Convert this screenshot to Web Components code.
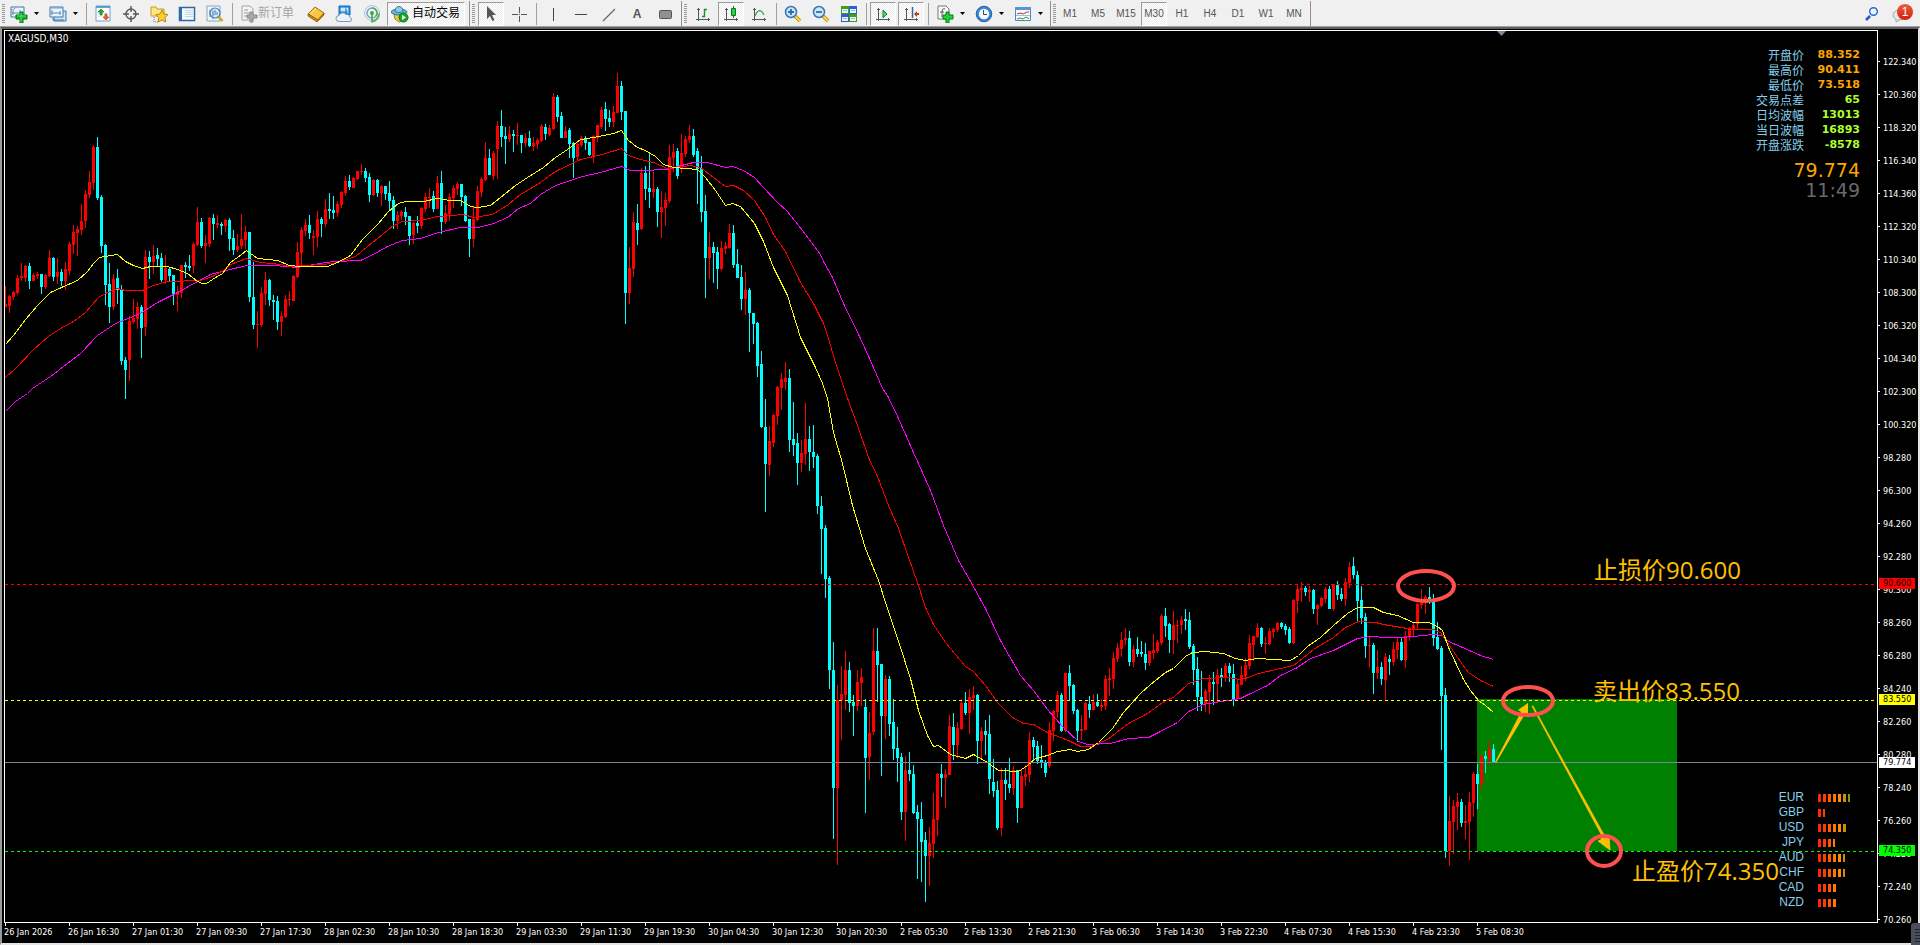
<!DOCTYPE html>
<html lang="zh-CN">
<head>
<meta charset="utf-8">
<title>XAGUSD,M30</title>
<style>
html,body{margin:0;height:100%;background:#000;overflow:hidden}
body{font-family:"Liberation Sans","Noto Sans CJK SC",sans-serif;--small:9px/12px "DejaVu Sans Condensed","Liberation Sans",sans-serif}
</style>
</head>
<body>
<trade-terminal></trade-terminal>
<script>
const ICONS={
newchart:'<path d="M1 2h13v10H1z" fill="#e8f3fb" stroke="#3f78a8"/><path d="M3 4v6M2 8h9M4 4l1-1M10 5v3" stroke="#5b8cb5" fill="none"/><path d="M10 7h3v3h4v4h-4v4h-3v-4H6v-4h4z" fill="#12b52a" stroke="#087018"/><path d="M11 8v9M7 11h9" stroke="#57e25c"/>',
profiles:'<path d="M5 6h12v10H5z" fill="#cfe3f4" stroke="#3f78a8"/><path d="M1 2h13v10H1z" fill="#e8f3fb" stroke="#3f78a8"/><path d="M1 3h13" stroke="#6ea3cf"/><path d="M3 5v5M2 8h10M11 6v4" stroke="#5b8cb5" fill="none"/><path d="M4 13v2h11" stroke="#3f78a8" fill="none"/>',
market:'<path d="M2 1h14v15H2z" fill="#fbfdff" stroke="#6ba3d6"/><path d="M2 2h14" stroke="#3b86c6" stroke-width="1.500"/><path d="M4 8h10M4 11h10" stroke="#bcd0e0" stroke-dasharray="1 1"/><path d="M7 4l3 3H8v3H6V7H4z" fill="#18b41a" stroke="#0a7a10" stroke-width=".6"/><path d="M12 15l-3-3h2V9h2v3h2z" fill="#f2622a" stroke="#b93206" stroke-width=".6"/>',
target:'<g fill="none" stroke="#555" stroke-width="1.4"><circle cx="9" cy="9" r="5"/><path d="M9 1v6M9 11v6M1 9h6M11 9h6"/></g>',
favs:'<path d="M1 2h5l1 2h7v7H1z" fill="#ffe48a" stroke="#c99a1c"/><path d="M4 12v5h5" stroke="#777" stroke-dasharray="1 1" fill="none"/><path d="M12 5l2 4 4 .5-3 3 .8 4.500-3.800-2-4 2 .8-4.500-3-3 4.200-.5z" fill="#f8cf35" stroke="#b98708"/>',
datawin:'<path d="M1.500 2.500h15v13h-15z" fill="#f6fbff" stroke="#2c69a3" stroke-width="1.500"/><path d="M2 3h2v12H2z" fill="#2f6eb0"/><path d="M7 5.500h8M7 7.500h8M7 9.500h8M7 11.500h8" stroke="#c4d5e6"/>',
tester:'<path d="M1 1h13v15H1z" fill="#eef6fc" stroke="#8aa5bd"/><path d="M4 12V5M7 14V3" stroke="#5c7890"/><circle cx="9" cy="8" r="5" fill="#cfe8fa" fill-opacity=".85" stroke="#4180b8" stroke-width="1.200"/><path d="M7 6v5M9 5v5M11 7v3" stroke="#547ba0"/><path d="M12.500 12l4 4" stroke="#d9a520" stroke-width="2.500"/>',
order:'<path d="M2 1h8l3 3v11H2z" fill="#f4f4f4" stroke="#a2a2a2"/><path d="M4 5h4M4 8h6M4 11h4" stroke="#999"/><path d="M10 7h3v3h4v3h-4v4h-3v-4H7v-3h3z" fill="#aaa" stroke="#8b8b8b"/>',
book:'<path d="M1 9l7-7 9 6-6 7z" fill="#f6c644" stroke="#a66e0c"/><path d="M1 9v2l9 6 7-7V8l-6 7z" fill="#c98a16" stroke="#8c5c08" stroke-width=".8"/><path d="M4 8l5-4" stroke="#ffe9a0"/>',
cloud:'<path d="M4 1h11v9H4z" fill="#2c8de0" stroke="#1769b5"/><path d="M6 3h4v3H6zM11 3h2v5" fill="#bfe3ff" stroke="#e6f4ff" stroke-width=".6"/><path d="M4 16.500a3 3 0 010-6 4 4 0 017-1 3.500 3.500 0 014 3 2 2 0 01-1 4z" fill="#eaf1f8" stroke="#7f98b2"/>',
signal:'<g fill="none"><circle cx="9" cy="8" r="7.500" stroke="#b2c3cf"/><circle cx="9" cy="8" r="5" stroke="#7f9ecb" stroke-width="1.500"/><path d="M9 8v8.500a8 8 0 007-8" stroke="#59b65d" stroke-width="2"/><path d="M9 3a5 5 0 014 8" stroke="#57a86a" stroke-width="1.500"/></g><circle cx="9" cy="8" r="2" fill="#2fae42"/>',
auto:'<path d="M3 9l11 0-1 6-5 2-4-3z" fill="#f5ca3e" stroke="#a97b12"/><ellipse cx="8" cy="7" rx="8" ry="3" fill="#65b4d8" stroke="#34789c"/><path d="M4 6c0-6 8-6 8 0-2 2-6 2-8 0z" fill="#8dcbe6" stroke="#34789c"/><circle cx="12.500" cy="12.500" r="4.500" fill="#16ad22" stroke="#0a7513"/><path d="M11 10v5l4-2.500z" fill="#fff"/>',
cursor:'<path d="M5 1v13l3-3 2.500 5 2-1-2.500-5h4z" fill="#555"/>',
cross:'<path d="M9.500 2v6M9.500 11v6M2 9.500h6M11 9.500h6M9 9.500h1" stroke="#555" fill="none"/>',
vline:'<path d="M9.500 3v13" stroke="#444"/>',
hline:'<path d="M3 9.500h12" stroke="#444"/>',
dline:'<path d="M3 16L15 4" stroke="#666" stroke-width="1.200"/>',
rect:'<rect x="3.500" y="5.500" width="12" height="8" rx="1" fill="#909090" stroke="#555"/>',
bars:'<g fill="none"><path d="M4.500 3v13M2 14.500h14" stroke="#555"/><path d="M3 4.500h3M14.500 13v3" stroke="#555"/><path d="M8 11.500h2.500V4.500H13" stroke="#0b9a20" stroke-width="1.400"/></g>',
candle:'<g fill="none"><path d="M4.500 3v13M2 14.500h14" stroke="#555"/><path d="M3 4.500h3M14.500 13v3" stroke="#555"/></g><path d="M11.500 1v12" stroke="#087a18"/><path d="M9.500 3.500h4v7h-4z" fill="#22d64a" stroke="#087a18"/>',
line:'<g fill="none"><path d="M4.500 3v13M2 14.500h14" stroke="#555"/><path d="M3 4.500h3M14.500 13v3" stroke="#555"/><path d="M5 11c3-7 6-7 9-1" stroke="#3d9a4e" stroke-width="1.200"/></g>',
zin:'<path d="M11 11l5 5" stroke="#b7860c" stroke-width="3.500"/><path d="M11 11l5 5" stroke="#ffdc46" stroke-width="1.800"/><circle cx="7" cy="7" r="5.500" fill="#c9e8fb" stroke="#3675b3" stroke-width="1.500"/><path d="M4 7h6M7 4v6" stroke="#2b6fae" stroke-width="1.800"/>',
zout:'<path d="M11 11l5 5" stroke="#b7860c" stroke-width="3.500"/><path d="M11 11l5 5" stroke="#ffdc46" stroke-width="1.800"/><circle cx="7" cy="7" r="5.500" fill="#c9e8fb" stroke="#3675b3" stroke-width="1.500"/><path d="M4 7h6" stroke="#2b6fae" stroke-width="1.800"/>',
tile:'<path d="M1 1h8v8H1zM9 9h8v8H9z" fill="#3fa012"/><path d="M9 1h8v8H9zM1 9h8v8H1z" fill="#2b62cf"/><path d="M2 4h6v4H2zM10 4h6v4h-6zM2 12h6v4H2zM10 12h6v4h-6z" fill="#eef4fb"/><path d="M3 5.500h4M11 5.500h4M3 13.500h4M11 13.500h4" stroke="#9fb6cf"/>',
scroll:'<g fill="none"><path d="M4.500 3v13M2 14.500h14" stroke="#555"/><path d="M3 4.500h3M14.500 13v3" stroke="#555"/></g><path d="M9 5l4 4-4 4z" fill="#4fd46c" stroke="#0b8a20"/>',
shift:'<g fill="none"><path d="M4.500 3v13M2 14.500h14" stroke="#555"/><path d="M3 4.500h3M14.500 13v3" stroke="#555"/><path d="M10.500 2v11" stroke="#1f6cb0" stroke-width="1.500"/></g><path d="M12 9l3-3v2h2v2h-2v2z" fill="#c43a14"/>',
indi:'<path d="M2 1h8l3 3v10H2z" fill="#fafafa" stroke="#777"/><path d="M9 4c-3-1-3 1-3 8M4 7h4" stroke="#555" fill="none"/><path d="M10 7h3v3h4v4h-4v4h-3v-4H7v-4h3z" fill="#1fd338" stroke="#087a18"/>',
clock:'<circle cx="9" cy="9" r="6.500" fill="#f4f9fd" stroke="#3a86d6" stroke-width="2.600"/><circle cx="9" cy="9" r="7.800" fill="none" stroke="#174d91" stroke-width=".8"/><path d="M8.500 5v4.500H12" stroke="#444" fill="none"/>',
tmpl:'<path d="M1.500 2.500h15v13h-15z" fill="#f8fcff" stroke="#4d88c4"/><path d="M1 2h16v3H1z" fill="#5a97d2"/><path d="M3 9l3-1 3 1 4-2 2 0" stroke="#b03a20" fill="none"/><path d="M2 10.500h14" stroke="#9fc0df"/><path d="M3 14l3-1 3 1 3-2 3 2" stroke="#2d9a3c" fill="none"/>',
find:'<path d="M7 11l-4 4" stroke="#2457c5" stroke-width="2.500"/><circle cx="10.500" cy="6.500" r="3.800" fill="#eaf5ff" stroke="#2f67d4" stroke-width="1.500"/>',
chat:'<ellipse cx="8" cy="10" rx="6" ry="5" fill="#e4e6ea" stroke="#a4a8ae"/><path d="M5 14l0 3 4-2" fill="#e4e6ea" stroke="#a4a8ae"/>'
};
const define=(name,html,init)=>customElements.define(name,class extends HTMLElement{
  connectedCallback(){
    if(this.shadowRoot)return;
    const t=document.createElement('template');t.innerHTML=html;
    this.attachShadow({mode:'open'}).append(t.content.cloneNode(true));
    if(init)init.call(this,this.shadowRoot);
  }
});

/* Toolbar pieces */
define('tool-button',`<style>
:host{display:block;width:28px;height:24px;flex:none}
:host([drop]){width:39px}:host([wide]){width:67px}:host([wide][pressed]){width:81px}
button{box-sizing:border-box;height:24px;width:100%;margin:0;padding:0 1px 0 4px;border:1px solid transparent;background:none;display:flex;align-items:center;color:#555;font:10px/12px "Liberation Sans",sans-serif}
:host([wide]) button{font:12px/16px "Noto Sans CJK SC",sans-serif;color:#000;padding:0 0 0 4px}
:host([wide]) slot{display:block;margin-top:-3px;white-space:nowrap}
:host([text]) button{padding:0;justify-content:center}
:host([wide]) button:disabled{color:#a5a5a5}
:host([pressed]) button{width:26px;margin-left:1px;padding-left:3px;border-color:#9c9c9c #fff #fff #9c9c9c;background:repeating-conic-gradient(#fff 0 25%,#ececec 0 50%) 0 0/2px 2px}
:host([pressed][text]) button{padding:0}
:host([pressed][wide]) button{width:78px;padding-left:3px;gap:3px}
svg{flex:none}.caret{margin-left:6px}.caret[hidden]{display:none}
</style><button type="button"><svg class="icon" width="18" height="18" viewBox="0 0 18 18"></svg><slot></slot><svg class="caret" hidden width="5" height="3" viewBox="0 0 5 3"><path d="M0 0h5L2.500 3z" fill="#000"/></svg></button>`,function(r){
  const i=r.querySelector('.icon'),b=r.querySelector('button');
  if(this.hasAttribute('icon'))i.innerHTML=ICONS[this.getAttribute('icon')];else i.style.display='none';
  if(this.hasAttribute('drop'))r.querySelector('.caret').removeAttribute('hidden');
  if(this.hasAttribute('label'))b.setAttribute('aria-label',this.getAttribute('label'));
  if(this.hasAttribute('off'))b.disabled=true;
  if(this.hasAttribute('pressed'))b.setAttribute('aria-pressed','true');
});
define('tool-sep',`<style>:host{display:block;width:6px;height:22px;flex:none;background:linear-gradient(#a0a0a0,#a0a0a0) 3px 0/1px 100% no-repeat}</style>`);
define('tool-group',`<style>
:host{display:flex;align-items:center;height:25px;padding-right:2px;border-right:1px solid #8f8f8f;flex:none}
i{width:3px;height:20px;margin:0 2px;background:repeating-linear-gradient(#999 0 1px,#f0f0f0 1px 2px)}
:host([first]) i{margin-right:0}
</style><i></i><slot></slot>`);
const tb=(icon,label,extra='')=>`<tool-button icon="${icon}" label="${label}" ${extra}></tool-button>`;
define('tool-bar',`<style>
:host{display:flex;align-items:center;height:25px;padding-top:1px;background:#f0f0f0;border-bottom:1px solid #a0a0a0;flex:none;overflow:hidden}
.end{margin-left:auto;display:flex;align-items:center;padding-right:6px}
.note{position:relative}
.note b{position:absolute;right:1px;top:2px;width:16px;height:16px;border-radius:8px;background:linear-gradient(#ee5a3c,#d3200f);color:#fff;font:12px/16px "Liberation Sans",sans-serif;text-align:center}
.a{font-size:12px;font-weight:bold}
</style>
<tool-group first>${tb('newchart','New chart','drop')}${tb('profiles','Profiles','drop')}<tool-sep></tool-sep>${tb('market','Market Watch')}${tb('target','Crosshair window')}${tb('favs','Navigator')}${tb('datawin','Terminal')}${tb('tester','Strategy Tester')}<tool-sep></tool-sep><tool-button icon="order" wide off>新订单</tool-button>${tb('book','MetaEditor')}${tb('cloud','Cloud')}${tb('signal','Signals')}<tool-button icon="auto" wide pressed>自动交易</tool-button></tool-group>
<tool-group>${tb('cursor','Cursor','pressed')}${tb('cross','Crosshair')}<tool-sep></tool-sep>${tb('vline','Vertical line')}${tb('hline','Horizontal line')}${tb('dline','Trend line')}<tool-button text><span class="a">A</span></tool-button>${tb('rect','Rectangle')}</tool-group>
<tool-group>${tb('bars','Bar chart')}${tb('candle','Candlesticks','pressed')}${tb('line','Line chart')}<tool-sep></tool-sep>${tb('zin','Zoom in')}${tb('zout','Zoom out')}${tb('tile','Tile windows')}<tool-sep></tool-sep>${tb('scroll','Auto scroll','pressed')}${tb('shift','Chart shift','pressed')}<tool-sep></tool-sep>${tb('indi','Indicators','drop')}${tb('clock','Periods','drop')}${tb('tmpl','Templates','drop')}</tool-group>
<tool-group first>${['M1','M5','M15','M30','H1','H4','D1','W1','MN'].map(t=>`<tool-button text ${t=='M30'?'pressed':''}>${t}</tool-button>`).join('')}</tool-group>
<div class="end">${tb('find','Search')}<div class="note">${tb('chat','Messages')}<b>1</b></div></div>`);

/* One entry per bar: colour, high, body top, body bottom, low (y positions) */
const BARS=`r286,304,307,307 r295,296,306,313 r291,292,297,300 r275,278,293,295 r263,276,278,281 r265,266,278,282 c263,266,281,289 r273,275,281,281 r272,274,276,279 c274,274,287,294 r274,275,287,289 r250,258,276,277 c257,258,277,281 r258,272,277,284 c269,272,281,286 r262,269,281,290 r242,244,271,275 r225,232,245,254 r226,229,233,256 r204,221,230,235 r190,194,221,228 r171,182,195,198 r145,147,183,190 c137,147,198,200 c195,197,246,253 c244,245,285,305 c263,284,307,323 r274,279,307,310 c269,278,290,304 c285,290,361,365 c357,360,370,399 r316,321,360,381 r299,318,322,324 r302,307,319,329 c305,307,328,358 r250,257,327,336 c251,257,262,279 r245,256,262,274 c248,255,259,267 c253,258,280,282 r255,268,280,284 c267,269,276,282 c275,275,295,305 r286,292,295,311 r265,265,293,298 c262,265,267,278 c255,266,268,271 r242,244,266,273 r207,222,245,246 c218,222,246,248 r235,243,246,263 r217,218,244,247 c214,218,224,240 r215,223,225,228 c222,224,226,235 r219,220,226,232 c218,220,239,251 c230,238,250,255 r234,246,250,252 r214,239,246,249 r226,232,240,249 c232,232,297,302 c262,297,325,329 r311,324,325,348 r287,293,325,327 r272,280,294,305 c279,280,300,306 c295,300,302,320 c296,301,322,330 r311,316,322,336 r295,299,317,318 r291,299,300,306 r275,276,301,301 r242,252,277,278 r227,230,253,266 r219,225,231,236 c215,225,233,239 r230,236,238,255 r211,219,237,247 c217,219,224,237 r199,209,224,227 c193,209,211,219 c196,210,213,219 r201,204,213,217 r191,192,205,208 r176,181,193,196 c175,181,187,190 r177,178,188,188 r171,171,179,180 r164,171,172,175 c168,171,178,182 c173,177,195,202 r179,180,195,196 c179,180,193,197 r185,186,193,206 c186,186,194,200 c181,193,201,210 c196,200,221,229 r211,215,221,229 r210,212,216,220 c207,212,217,225 c216,216,236,245 r222,223,235,244 c216,223,226,233
r207,208,226,229 r193,197,209,212 r188,197,198,208 c191,196,209,212 r176,183,209,209 c171,183,222,234 r205,213,222,224 r193,197,214,221 r185,188,198,208 r182,184,189,195 c184,184,197,206 c195,196,221,222 c219,219,239,257 r206,219,239,247 r186,191,220,221 r177,179,192,197 r142,158,180,181 c149,158,175,175 r151,153,176,180 r121,126,149,179 c110,126,137,147 c127,136,139,164 r126,134,139,142 c130,134,136,152 r123,135,136,145 c135,135,143,153 r133,138,143,147 c131,138,146,147 r137,143,146,151 r138,140,144,149 r124,126,141,142 c124,127,134,140 r125,128,135,136 r93,97,129,130 c95,97,117,122 c112,116,138,138 r126,131,138,138 c128,130,144,158 c142,143,158,178 r142,144,157,161 r136,138,145,147 c136,138,143,150 c142,142,155,156 r135,136,156,163 r125,125,138,142 r107,110,127,129 c102,109,119,131 c110,118,122,127 r106,112,122,127 r73,86,113,113 c81,86,112,120 c111,111,293,324 r247,268,293,304 r212,222,269,277 c204,223,230,245 r168,173,229,230 c166,173,189,200 c153,188,192,208 r172,189,192,198 c187,189,212,227 r191,207,212,238 r193,200,208,226 r145,157,201,203 r144,152,158,172 c148,151,176,179 r134,153,168,173 r136,139,154,157 r125,136,140,143 c129,136,155,157 c148,151,169,204 c156,168,212,222 c195,211,258,298 r232,247,258,279 c242,247,253,283 c247,252,269,289 r241,248,269,271 r242,246,249,254 r224,233,248,249 c225,233,265,268 c249,264,278,278 c265,277,299,310 r272,290,299,315 c288,290,313,352 c313,313,324,344
c322,323,366,377 c351,364,427,428 c399,427,464,512 r426,441,465,476 r414,415,443,447 r386,387,416,425 r373,379,388,410 r362,378,382,390 c369,378,440,452 c402,439,445,456 c433,443,463,485 r440,453,463,472 r403,439,454,465 c426,439,452,471 c425,452,457,468 c454,456,506,514 c496,506,529,574 c525,528,579,598 c576,578,670,689 c642,670,788,839 r685,700,788,865 r666,694,700,740 r651,670,695,710 c662,670,703,712 c695,702,706,736 r670,682,706,711 r668,677,683,706 c699,707,758,813 r712,733,757,780 r628,651,732,735 c628,651,665,702 c664,664,716,776 r675,679,716,739 c676,679,724,736 c699,722,749,760 c727,748,758,782 c753,757,812,820 r756,770,812,841 c752,770,774,781 c765,774,813,814 c805,812,819,879 c802,819,842,882 c832,840,856,902 r827,843,856,886 r793,819,844,858 r773,774,820,836 c764,774,778,797 r769,774,778,808 r715,726,775,775 c713,727,745,760 r722,728,745,758 r699,703,729,730 c692,703,713,715 r689,697,713,734 r686,695,698,710 c694,695,741,764 r727,731,741,759 c720,731,735,755 c715,734,779,794 c759,782,791,797 c781,790,828,830 r768,780,828,836 c768,780,784,800 c758,784,788,793 r766,770,788,795 c770,770,808,823 r769,776,808,808 r765,774,777,786 r732,740,775,782 c737,740,747,761 c741,746,761,764 c745,760,763,768 c760,762,773,777 r722,730,766,768 r710,711,731,741 r691,695,712,718 c693,695,731,732 r673,673,731,732 c665,673,686,701 c684,685,711,714 c709,710,731,742 r715,729,731,740 r702,703,730,730 c696,704,710,718 r694,702,710,710 c694,702,706,707 r699,705,707,711 r675,679,706,710 r668,678,680,696 r652,658,679,689 r643,648,659,662 r632,640,649,657 r628,638,640,645 c631,638,662,666 r645,649,662,667 c637,649,654,657 c641,652,654,657 c643,654,663,670 r651,651,663,666 r634,650,653,659 r640,642,651,653 r614,616,643,645 c608,616,626,637 c623,624,640,653 r611,625,640,654 r620,625,626,643 r616,620,625,634 c609,619,621,630 c612,620,647,649 c644,646,670,685 c657,669,697,711 c671,697,704,711 r689,691,704,712 r675,682,692,714 c672,682,684,705 r669,675,684,702
c668,675,677,687 r663,666,677,682 c663,666,673,682 c664,674,699,706 r679,684,699,699 r666,675,685,685 r658,665,676,681 r635,643,666,669 r636,636,645,661 r623,628,637,638 c627,628,644,647 r637,643,644,654 r628,631,644,645 r628,629,632,638 r622,623,630,632 c622,623,627,629 c624,626,630,635 c627,629,643,644 r599,600,643,644 r584,589,601,613 r582,588,590,602 c586,588,592,596 r586,590,592,602 c589,590,609,614 r604,605,609,625 r597,598,606,607 r587,589,599,603 c586,589,609,609 r584,584,609,611 c581,585,595,600 c588,594,599,601 r578,582,599,606 r562,567,583,588 c557,566,575,579 c571,575,601,621 c586,600,618,624 c613,617,646,658 r636,645,646,667 c643,645,673,694 r650,667,673,679 c662,667,679,685 r653,657,680,700 c655,659,662,675 r642,649,662,666 r637,642,650,659 c638,642,660,661 r631,636,660,668 r627,628,637,641 r623,625,630,637 r603,604,624,629 r589,602,605,609 r595,597,602,614 c587,597,599,604 c594,599,638,646 c622,637,649,650 c646,648,696,750 c688,695,851,858 r796,821,851,866 r800,806,822,854 r793,802,807,830 c799,802,823,827 r805,821,823,839 r792,802,822,860 r772,774,803,817 c764,774,784,809 r754,756,784,790 c751,756,759,773 r741,749,759,765 c744,749,763,763`.split(/\s+/);
const MA=[
['#ff00ff','5,411 15,401 27,393 32,388 50,376 67,363 80,353 97,335 115,323 140,313 157,302 177,292 197,281 210,274 225,270 247,265 273,265 297,267 313,264 333,261 360,260 373,254 387,246 402,240 420,238 438,232 460,227 478,227 493,223 507,217 518,208 530,203 540,194 555,185 582,176 600,172 621,166 630,170 640,170 667,169 677,166 693,162 707,162 725,167 732,166 743,170 754,177 763,187 777,202 787,211 802,230 820,254 823,261 832,277 843,303 860,338 873,367 882,388 887,395 898,418 913,452 930,490 943,525 958,560 969,579 985,608 1000,640 1020,675 1033,690 1047,709 1063,727 1078,741 1087,744 1110,743 1128,738 1148,737 1158,732 1177,722 1188,711 1203,704 1227,700 1240,698 1248,694 1267,685 1280,675 1297,667 1310,658 1333,650 1347,643 1357,638 1370,636 1387,637 1400,637 1413,636 1433,634 1442,635 1448,641 1460,646 1480,655 1493,659'],
['#ff0000','5,377 15,368 33,349 48,336 60,328 73,321 85,312 98,297 107,292 117,288 125,290 142,290 153,285 167,281 200,280 212,276 223,270 230,264 246,258 260,262 280,264 290,266 307,265 333,263 355,256 367,246 382,234 393,225 402,221 420,220 437,216 463,214 473,217 492,214 508,204 520,194 537,184 555,171 580,159 602,154 621,148 628,155 640,159 653,162 667,168 690,165 700,167 713,177 725,186 733,185 743,190 754,200 765,217 773,234 785,251 800,282 813,303 823,323 828,338 835,362 845,392 857,425 868,457 877,476 888,505 898,528 908,557 917,582 925,607 933,624 945,642 965,666 973,671 985,685 997,702 1012,717 1023,723 1033,724 1047,732 1068,740 1080,746 1090,746 1107,739 1128,723 1147,713 1165,700 1173,697 1188,683 1203,678 1227,677 1240,679 1248,677 1258,673 1280,668 1293,665 1302,658 1313,649 1333,637 1345,627 1358,621 1375,622 1383,624 1395,626 1413,629 1433,629 1440,632 1447,642 1457,657 1468,672 1480,680 1493,686'],
['#ffff00','5,344 13,335 25,319 37,305 50,292 61,287 77,280 87,271 93,263 99,257 117,254 125,261 133,265 142,268 150,266 167,266 177,269 187,273 197,281 202,283 206,283 212,279 222,273 230,262 241,254 246,250 257,258 277,260 289,265 300,266 327,266 337,262 350,255 362,239 377,224 388,211 398,203 405,201 423,201 437,198 450,200 460,200 470,206 477,207 490,205 500,197 515,185 527,177 543,167 555,157 567,149 580,139 593,137 613,133 621,130 628,140 637,147 645,150 655,156 663,164 673,167 697,169 705,177 715,190 725,205 732,203 740,206 754,223 763,241 773,267 787,295 800,337 815,367 822,383 827,398 833,432 842,463 852,505 865,548 878,580 885,602 900,647 910,678 918,710 927,735 933,746 938,745 950,754 965,758 973,754 987,762 998,770 1018,771 1027,765 1035,758 1047,755 1057,751 1070,749 1077,751 1088,749 1098,742 1112,728 1123,712 1140,693 1150,684 1165,672 1173,668 1185,656 1192,652 1205,651 1223,653 1235,658 1245,660 1257,658 1290,660 1298,655 1307,646 1320,637 1333,625 1347,613 1357,607 1373,607 1383,612 1397,615 1413,622 1428,622 1437,626 1442,630 1448,647 1463,679 1470,690 1478,700 1485,705 1493,712']];
define('candle-plot',`<style>:host{display:block;overflow:hidden}svg{display:block;width:100%;height:100%}.px{shape-rendering:crispEdges}</style>
<svg role="img" aria-label="XAGUSD M30"></svg>`,function(r){
  const d={r:'',c:''};
  BARS.forEach((s,k)=>{
    const x=5+4*k,[h,t,b,l]=s.slice(1).split(',').map(Number);
    d[s[0]]+=`M${x} ${h}h1V${Math.max(l,b)}h-1zM${x-1} ${t}h3V${Math.max(b,t+1)}h-3z`;
  });
  const level=(y,c)=>`<line x1="5" x2="6000" y1="${y}" y2="${y}" transform="translate(0 .5)" stroke="${c}" stroke-dasharray="3 3"/>`;
  r.querySelector('svg').innerHTML=`<g transform="translate(-5 -31)"><g class="px">
<rect x="1477" y="699" width="200" height="152" fill="#008000"/>
<path d="${d.r}" fill="#ff0000"/><path d="${d.c}" fill="#00ffff"/>
${MA.map(m=>`<polyline transform="translate(.5 .5)" points="${m[1]}" fill="none" stroke="${m[0]}"/>`).join('')}
<path d="M5 762h6000v1H5z" fill="#778899"/>
${level(584,'#ff0000')}${level(700,'#ffff00')}${level(851,'#00ff00')}</g>
<path d="M1497 31h9l-4.500 5z" fill="#778899"/>
<path d="M1495 762L1521 712l-3-2 10-7 0 13-3-2L1496 763z" fill="#ffc000"/>
<path d="M1532 706l69 128 0 6-3 1 12 9-1-15-3 1-3-3L1533 706z" fill="#ffc000" stroke="#ffc000" stroke-width=".8"/>
<g fill="none" stroke="#ff5050" stroke-width="4"><ellipse cx="1426" cy="586" rx="28" ry="15"/><ellipse cx="1528" cy="701" rx="25" ry="14"/><ellipse cx="1604" cy="851" rx="17" ry="15"/></g></g>`;
});

define('quote-panel',`<style>:host{display:block;text-align:right}
table{border-collapse:collapse;margin-left:auto}tr{height:15px}
th,td{padding:0;line-height:15px;text-align:right}
th{font:12px/15px "Noto Sans CJK SC",sans-serif;color:#87ceeb}
td{width:56px;font:bold 11px/15px "DejaVu Sans",sans-serif;color:#adff2f}
.o td{color:#ffa500}
p{margin:0;font:19px/20px "DejaVu Sans",sans-serif;color:#696969}
.last{color:#ffa500;margin-top:8px}
</style><table>${[['开盘价','88.352'],['最高价','90.411'],['最低价','73.518'],['交易点差','65'],['日均波幅','13013'],['当日波幅','16893'],['开盘涨跌','-8578']].map((x,i)=>`<tr class="${i<3?'o':''}"><th scope="row">${x[0]}</th><td>${x[1]}</td></tr>`).join('')}</table><p class="last">79.774</p><p>11:49</p>`);

const HEAT=['#ff2800','#ff3c00','#ff5a00','#ff7800','#ff8c00','#c89000','#8c9600'];
define('currency-strength',`<style>:host{display:block}
.row{display:grid;grid-template-columns:32px 45px;column-gap:14px;height:15px;align-items:center;font:12px/15px "Liberation Sans",sans-serif;color:#87ceeb}
.row>span{text-align:right}.bars{display:flex;gap:2px}i{width:3px;height:8px}i.n{width:2px}
</style>${[['EUR',7,1],['GBP',2,1],['USD',6,0],['JPY',4,1],['AUD',6,1],['CHF',6,1],['CAD',4,0],['NZD',4,0]].map(([n,c,p])=>`<div class="row"><span>${n}</span><div class="bars">${HEAT.slice(0,c).map((h,i)=>`<i style="background:${h}" class="${p&&i==c-1?'n':''}"></i>`).join('')}</div></div>`).join('')}`);

define('price-axis',`<style>:host{display:block;position:relative;padding-top:15px;color:#fff;font:var(--small)}
ol{list-style:none;margin:0;padding:0}li{height:33px;display:flex;align-items:center;gap:3px}
li::before{content:"";width:2px;height:1px;background:#fff}
b{position:absolute;left:1px;width:32px;padding-left:4px;height:11px;line-height:11px;color:#000;font-weight:normal}
</style><ol>${'122.340 120.360 118.320 116.340 114.360 112.320 110.340 108.300 106.320 104.340 102.300 100.320 98.280 96.300 94.260 92.280 90.300 88.260 86.280 84.240 82.260 80.280 78.240 76.260 74.220 72.240 70.260'.split(' ').map(v=>`<li>${v}</li>`).join('')}</ol>
<b style="top:548px;background:#f00">90.600</b><b style="top:664px;background:#ff0">83.550</b><b style="top:727px;background:#fff">79.774</b><b style="top:815px;background:#0f0">74.350</b>`);

define('time-axis',`<style>:host{display:block;overflow:hidden}
ol{list-style:none;margin:0;padding:0;display:flex}
li{flex:none;width:64px;color:#fff;font:var(--small);white-space:nowrap}
li::before{content:"";display:block;width:1px;height:3px;margin-left:1px;background:#fff}
</style><ol>${['26 Jan 2026','26 Jan 16:30','27 Jan 01:30','27 Jan 09:30','27 Jan 17:30','28 Jan 02:30','28 Jan 10:30','28 Jan 18:30','29 Jan 03:30','29 Jan 11:30','29 Jan 19:30','30 Jan 04:30','30 Jan 12:30','30 Jan 20:30','2 Feb 05:30','2 Feb 13:30','2 Feb 21:30','3 Feb 06:30','3 Feb 14:30','3 Feb 22:30','4 Feb 07:30','4 Feb 15:30','4 Feb 23:30','5 Feb 08:30'].map(v=>`<li>${v}</li>`).join('')}</ol>`);

define('chart-window',`<style>
:host{display:grid;grid-template-columns:1fr 40px;grid-template-rows:1fr 20px;background:#000;border:solid;border-width:2px;border-color:#606060 #e4e4e4 #e4e4e4 #9a9a9a;padding:1px 0 0 2px;min-height:0;position:relative}
.plot{position:relative;border:1px solid #fff;min-width:0;min-height:0;overflow:hidden}
candle-plot{position:absolute;inset:0}
h1{position:absolute;left:3px;top:2px;margin:0;color:#fff;font:var(--small);font-size:10px}
quote-panel{position:absolute;right:17px;top:16px}
currency-strength{position:absolute;right:14px;bottom:12px}
.tag{position:absolute;color:#ffc000;font:24px/30px "Open Sans","Noto Sans CJK SC",sans-serif;white-space:nowrap}
price-axis{grid-column:2;grid-row:1/3}
time-axis{grid-column:1}
.grip{position:absolute;right:-2px;bottom:-2px;width:9px;height:22px;box-sizing:border-box;border-radius:3px 0 0 0;background:repeating-linear-gradient(#23252c 0 1px,#4b4e5a 1px 3px) 4px 6px/5px 14px no-repeat,#4b4e5a}
</style>
<div class="plot"><candle-plot></candle-plot><h1>XAGUSD,M30</h1><quote-panel></quote-panel><currency-strength></currency-strength>
<div class="tag" style="left:1589px;top:524px">止损价90.600</div><div class="tag" style="left:1588px;top:645px">卖出价83.550</div><div class="tag" style="left:1627px;top:825px">止盈价74.350</div></div>
<price-axis></price-axis><time-axis></time-axis><div class="grip"></div>`);

define('trade-terminal',`<style>:host{display:flex;flex-direction:column;height:100vh}chart-window{flex:1}</style><tool-bar></tool-bar><chart-window></chart-window>`);
</script>
</body>
</html>
